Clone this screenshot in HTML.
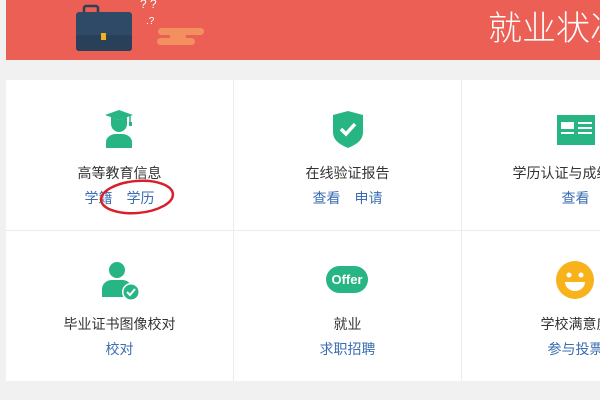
<!DOCTYPE html><html><head><meta charset="utf-8"><style>
html,body{margin:0;width:600px;height:400px;overflow:hidden}
body{background:#f1f1f1;position:relative;font-family:"Liberation Sans","Noto Sans CJK SC",sans-serif}
.a{position:absolute}
.t{position:absolute;width:227px;text-align:center;font-size:14px;color:#333;white-space:nowrap;overflow:visible}
.l{position:absolute;width:227px;text-align:center;font-size:14px;color:#3a6db3;white-space:nowrap}
.l span{margin:0 7px}
.clip{position:absolute;left:0;top:0;width:600px;height:400px;overflow:hidden}
</style></head><body><div class="clip">
<div class="a" style="left:6px;top:0;width:594px;height:60px;background:#ec5f55"></div>
<svg class="a" style="left:60px;top:0" width="160" height="60">
<rect x="24" y="6" width="14" height="10" rx="2" fill="none" stroke="#2c4058" stroke-width="2.5"/>
<rect x="16" y="12" width="56" height="39" rx="3" fill="#2f4a66"/>
<rect x="16" y="35" width="56" height="16" rx="3" fill="#29405a"/>
<rect x="41" y="33" width="5" height="7" fill="#f2b21c"/>
<rect x="98" y="28" width="46" height="7" rx="3.5" fill="#f2905f"/>
<rect x="110" y="33" width="16" height="6" fill="#f2905f"/>
<rect x="97" y="38" width="38" height="7" rx="3.5" fill="#f2905f"/>
<text x="80" y="8" fill="#fff" font-size="12">? ?</text>
<text x="86" y="24" fill="#fff" font-size="10">.?</text>
</svg>
<div class="a" style="left:488px;top:1px;font-size:34px;color:#fff;white-space:nowrap;font-family:'Noto Sans CJK SC',sans-serif;font-weight:300">就业状况</div>
<div class="a" style="left:6px;top:80px;width:594px;height:301px;background:#fff"></div>
<div class="a" style="left:233px;top:80px;width:1px;height:301px;background:#ececec"></div>
<div class="a" style="left:461px;top:80px;width:1px;height:301px;background:#ececec"></div>
<div class="a" style="left:6px;top:230px;width:594px;height:1px;background:#ececec"></div>
<svg class="a" style="left:100px;top:108px" width="40" height="42">
<path d="M5 7 L19 2 L33 7 L19 12Z" fill="#27b584"/><path d="M30 8 V15" stroke="#27b584" stroke-width="1.5"/><rect x="29" y="14" width="3" height="4" fill="#27b584"/>
<path d="M11 9 V16 a8 8 0 0 0 16 0 V9 L19 12Z" fill="#27b584"/>
<path d="M6 40 V34 a10 8 0 0 1 10 -8 h6 a10 8 0 0 1 10 8 V40Z" fill="#27b584"/>
</svg>
<svg class="a" style="left:330px;top:110px" width="36" height="40">
<path d="M3 5 L18 1 L33 5 V22 C33 31 25 35 18 38 C11 35 3 31 3 22Z" fill="#27b584"/>
<path d="M11 19 L16 24 L25 14" fill="none" stroke="#fff" stroke-width="3.5"/>
</svg>
<svg class="a" style="left:557px;top:115px" width="43" height="30">
<rect width="38" height="30" fill="#27b584"/>
<rect x="4" y="7" width="13" height="7" fill="#fff"/><rect x="4" y="17" width="13" height="2" fill="#fff"/>
<rect x="21" y="7" width="14" height="2" fill="#fff"/><rect x="21" y="12" width="14" height="2" fill="#fff"/><rect x="21" y="17" width="14" height="2" fill="#fff"/>
</svg>
<svg class="a" style="left:100px;top:260px" width="42" height="42">
<circle cx="17" cy="10" r="8" fill="#27b584"/>
<path d="M2 37 V29 a10 9 0 0 1 10 -9 h10 a10 9 0 0 1 10 9 V37Z" fill="#27b584"/>
<circle cx="31" cy="32" r="9" fill="#fff"/><circle cx="31" cy="32" r="7.5" fill="#27b584"/>
<path d="M27 32 L30 35 L35 29" fill="none" stroke="#fff" stroke-width="2"/>
</svg>
<div class="a" style="left:326px;top:266px;width:42px;height:27px;border-radius:14px;background:#27b584;color:#fff;font-weight:bold;font-size:13px;line-height:27px;text-align:center;font-family:'Liberation Sans',sans-serif">Offer</div>
<svg class="a" style="left:556px;top:261px" width="40" height="40">
<circle cx="19" cy="19" r="19" fill="#f7b21c"/><circle cx="13" cy="14" r="2.5" fill="#fff"/><circle cx="25" cy="14" r="2.5" fill="#fff"/>
<path d="M9 21 H29 A10 9 0 0 1 9 21Z" fill="#fff"/>
</svg>
<div class="t" style="left:6px;top:163px">高等教育信息</div>
<div class="l" style="left:6px;top:188px"><span>学籍</span><span>学历</span></div>
<div class="t" style="left:234px;top:163px">在线验证报告</div>
<div class="l" style="left:234px;top:188px"><span>查看</span><span>申请</span></div>
<div class="t" style="left:462px;top:163px">学历认证与成绩验证</div>
<div class="l" style="left:462px;top:188px"><span>查看</span></div>
<div class="t" style="left:6px;top:314px">毕业证书图像校对</div>
<div class="l" style="left:6px;top:339px"><span>校对</span></div>
<div class="t" style="left:234px;top:314px">就业</div>
<div class="l" style="left:234px;top:339px"><span>求职招聘</span></div>
<div class="t" style="left:462px;top:314px">学校满意度</div>
<div class="l" style="left:462px;top:339px"><span>参与投票</span></div>
<svg class="a" style="left:95px;top:175px" width="85" height="45">
<ellipse cx="42" cy="22" rx="36" ry="16" fill="none" stroke="#d9202a" stroke-width="2.5" transform="rotate(-5 42 22)"/>
</svg>
</div></body></html>
